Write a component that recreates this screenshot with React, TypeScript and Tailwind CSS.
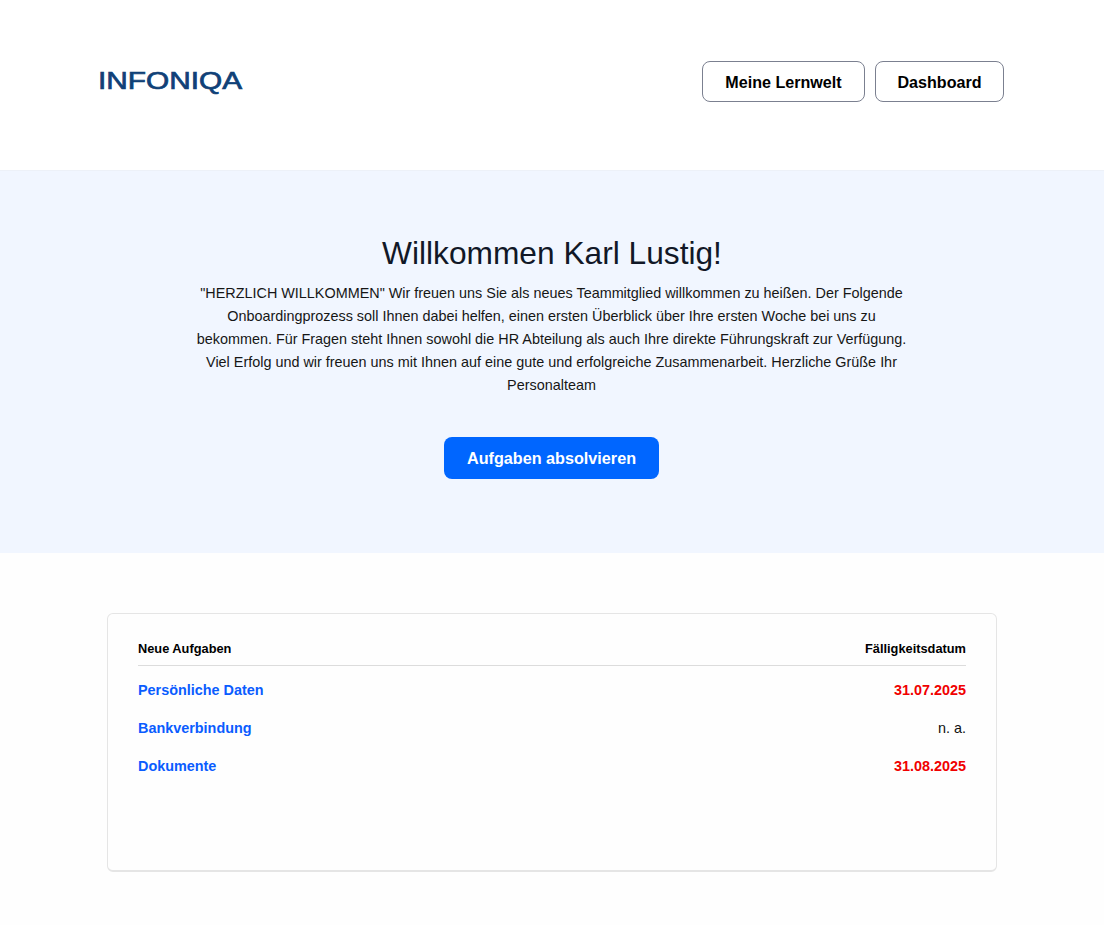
const tasks = [
  { name: "Persönliche Daten", due: "31.07.2025", overdue: true },
  { name: "Bankverbindung", due: "n. a.", overdue: false },
  { name: "Dokumente", due: "31.08.2025", overdue: true },
];

function Logo() {
  return (
    <svg width="160" height="40" viewBox="0 0 160 40" className="block overflow-visible" aria-label="INFONIQA">
      <text
        x="0"
        y="19"
        textLength="144"
        lengthAdjust="spacingAndGlyphs"
        fontFamily="Liberation Sans, sans-serif"
        fontSize="24.5"
        fill="#0f4177"
        stroke="#0f4177"
        strokeWidth="0.7"
      >
        INFONIQA
      </text>
    </svg>
  );
}

export default function App() {
  return (
    <div className="min-h-screen bg-[#fefefe] font-['Liberation_Sans',Arial,sans-serif]">
      <header className="flex h-[170px] items-start justify-between bg-white pl-[98px] pr-[100px] pt-[61px]">
        <div className="pt-[9px]">
          <Logo />
        </div>
        <div className="flex gap-[10px]">
          <button className="h-[41px] w-[163px] rounded-lg border border-[#7b8090] bg-white pt-[1px] text-[16.1px] font-bold text-black">
            Meine Lernwelt
          </button>
          <button className="h-[41px] w-[129px] rounded-lg border border-[#7b8090] bg-white pt-[1px] text-[16.1px] font-bold text-black">
            Dashboard
          </button>
        </div>
      </header>

      <section className="flex h-[383px] flex-col items-center border-t border-[#edf1f8] bg-[#f1f6ff] pt-[62px]">
        <h1 className="text-[31.7px] leading-[40px] text-[#111827]">Willkommen Karl Lustig!</h1>
        <p className="mr-[1px] mt-[9px] w-[720px] text-center text-[14.4px] leading-[23px] text-[#161616]">
          "HERZLICH WILLKOMMEN" Wir freuen uns Sie als neues Teammitglied willkommen zu heißen. Der Folgende
          Onboardingprozess soll Ihnen dabei helfen, einen ersten Überblick über Ihre ersten Woche bei uns zu
          bekommen. Für Fragen steht Ihnen sowohl die HR Abteilung als auch Ihre direkte Führungskraft zur Verfügung.
          Viel Erfolg und wir freuen uns mit Ihnen auf eine gute und erfolgreiche Zusammenarbeit. Herzliche Grüße Ihr
          Personalteam
        </p>
        <button className="mr-[1px] mt-[40px] h-[42px] w-[215px] rounded-lg bg-[#0066ff] text-[16.2px] font-bold text-white">
          Aufgaben absolvieren
        </button>
      </section>

      <main className="px-[107px] pb-[54px] pt-[60px]">
        <div className="h-[259px] rounded-md border border-b-2 border-[#e5e5e5] bg-[#fefefe] px-[30px] pt-[27px]">
          <div className="flex justify-between border-b border-[#dcdcdc] pb-[8px] text-[12.8px] font-bold leading-[16px] text-black">
            <span>Neue Aufgaben</span>
            <span>Fälligkeitsdatum</span>
          </div>
          <ul className="mt-[6px]">
            {tasks.map((task) => (
              <li key={task.name} className="flex h-[38px] items-center justify-between text-[14.4px]">
                <span className="font-bold text-[#0a5cff]">{task.name}</span>
                <span className={task.overdue ? "font-bold text-[#f00000]" : "text-[#111111]"}>{task.due}</span>
              </li>
            ))}
          </ul>
        </div>
      </main>
    </div>
  );
}
